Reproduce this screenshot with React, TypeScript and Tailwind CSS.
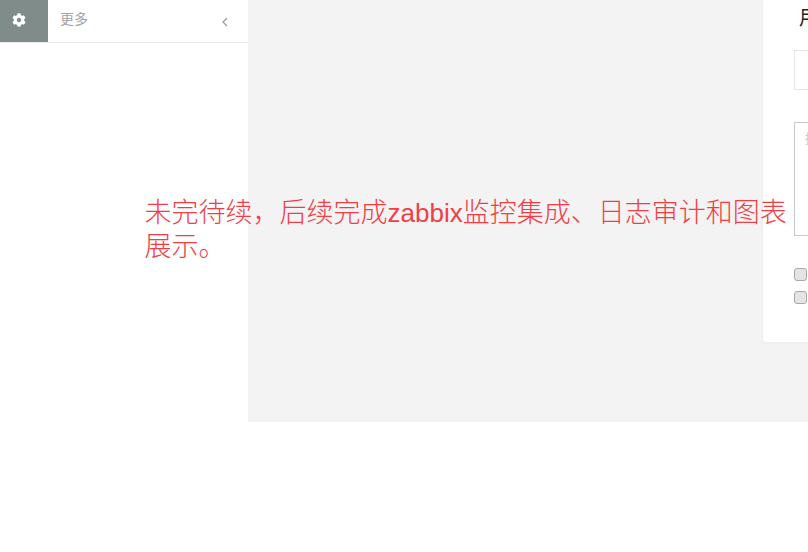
import React from "react";
import { FaCog } from "react-icons/fa";

const font = { fontFamily: '"Liberation Sans", "Noto Sans CJK SC", sans-serif' };

export default function App() {
  return (
    <div className="relative h-[552px] w-[808px] overflow-hidden bg-white" style={font}>
      <div className="flex h-[422px] w-full">
        <aside className="w-[248px] shrink-0 bg-white">
          <div className="flex h-[43px] border-b border-[#e7eaec]">
            <div className="flex w-[48px] items-center pb-[3px] pl-[12px] bg-[#7f8c8a] text-[14px] text-white">
              <FaCog />
            </div>
            <div className="flex flex-1 items-center justify-between pl-3 pr-[20px] text-[14px] text-[#a3a3a3]">
              <span className="pb-[3px]">更多</span>
              <svg width="6" height="10" viewBox="0 0 6 10" fill="none" stroke="#999" strokeWidth="1.2" className="mt-[2px]">
                <path d="M5 1 L1 5 L5 9" />
              </svg>
            </div>
          </div>
        </aside>
        <main className="min-w-0 flex-1 overflow-hidden bg-[#f3f3f4] pl-[515px]">
          <section className="h-[342px] w-[300px] rounded-b-[3px] bg-white pl-[31px] shadow-[0_0_2px_rgba(0,0,0,0.08)]">
            <h2 className="h-[50px] whitespace-nowrap pl-[5px] pt-[4px] text-[20px] leading-[28px] text-[#222]">用户</h2>
            <div className="h-[40px] w-[260px] border border-[#e5e6e7] bg-white" />
            <div className="mt-[32px] h-[114px] w-[260px] border border-[#c9c9c9] bg-white px-[10px] py-[6px] text-[13px] text-[#ccc]">描述</div>
            <div className="mt-[32px] flex flex-col gap-[10px]">
              <div className="h-[13px] w-[13px] rounded-[3px] border border-[#aaa] bg-[#e4e4e4]" />
              <div className="h-[13px] w-[13px] rounded-[3px] border border-[#aaa] bg-[#e4e4e4]" />
            </div>
          </section>
        </main>
      </div>
      <p className="absolute left-[144.5px] top-[196px] w-[645px] text-[27px] font-light leading-[34px] text-[#f23d45]">
        未完待续，后续完成<span className="text-[26px] font-normal">zabbix</span>监控集成、日志审计和图表展示。
      </p>
    </div>
  );
}
